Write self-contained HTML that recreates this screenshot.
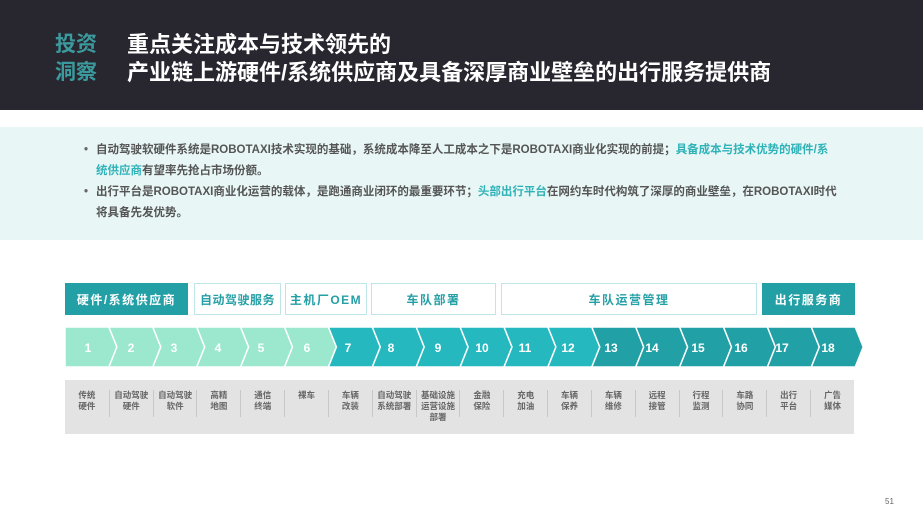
<!DOCTYPE html>
<html><head><meta charset="utf-8"><style>
*{margin:0;padding:0;box-sizing:border-box}
body{width:923px;height:511px;background:#fff;position:relative;overflow:hidden;font-family:"Liberation Sans","Noto Sans CJK SC",sans-serif}
.hdr{position:absolute;left:0;top:0;width:923px;height:110px;background:#28262f}
.tag{position:absolute;left:55px;top:31px;color:#3b9a9d;font-size:21px;font-weight:bold;line-height:28px}
.ttl{position:absolute;left:127px;top:31px;color:#fff;font-size:22px;font-weight:bold;line-height:28px;white-space:nowrap}
.info{position:absolute;left:0;top:127px;width:923px;height:113px;background:#e8f6f6}
.info p{position:absolute;left:96px;white-space:nowrap;font-size:11.5px;line-height:21px;color:#555;font-weight:bold}
.info p:before{content:"•";position:absolute;left:-12px;color:#666}
.hl{color:#2fb3b8}
.box{position:absolute;top:283px;height:32px;border:1.5px solid #bfe5e6;color:#25a0a6;font-size:12px;font-weight:bold;display:flex;align-items:center;justify-content:center;letter-spacing:1.5px}
.box.f{background:#22a0a6;color:#fff;border-color:#22a0a6}
.grey{position:absolute;left:65px;top:380px;width:789px;height:54px;background:#e3e3e3;display:flex;padding-top:10px}
.grey div{width:43.83px;text-align:center;font-size:8.5px;line-height:11px;color:#666;font-weight:bold;border-left:1px solid #c8c8c8;height:27px;white-space:nowrap}
.grey div:first-child{border-left:none}
.pn{position:absolute;left:885px;top:497px;font-size:8px;color:#666}
</style></head><body>
<div class="hdr"></div>
<div class="tag">投资<br>洞察</div>
<div class="ttl">重点关注成本与技术领先的<br>产业链上游硬件/系统供应商及具备深厚商业壁垒的出行服务提供商</div>
<div class="info">
<p style="top:13px">自动驾驶软硬件系统是ROBOTAXI技术实现的基础，系统成本降至人工成本之下是ROBOTAXI商业化实现的前提；<span class="hl">具备成本与技术优势的硬件/系<br>统供应商</span>有望率先抢占市场份额。</p>
<p style="top:55px">出行平台是ROBOTAXI商业化运营的载体，是跑通商业闭环的最重要环节；<span class="hl">头部出行平台</span>在网约车时代构筑了深厚的商业壁垒，在ROBOTAXI时代<br>将具备先发优势。</p>
</div>
<div class="box f" style="left:65px;width:123px">硬件/系统供应商</div>
<div class="box" style="left:194px;width:87px;letter-spacing:0.5px">自动驾驶服务</div>
<div class="box" style="left:285px;width:82px">主机厂OEM</div>
<div class="box" style="left:371px;width:125px">车队部署</div>
<div class="box" style="left:501px;width:256px">车队运营管理</div>
<div class="box f" style="left:762px;width:93px">出行服务商</div>
<svg style="position:absolute;left:0;top:0" width="923" height="511">
<g stroke="#fff" stroke-width="1.5">
<polygon fill="#9be8cf" points="65,327 108.9,327 116.9,347 108.9,367 65,367"/>
<polygon fill="#9be8cf" points="108.9,327 152.8,327 160.8,347 152.8,367 108.9,367 116.9,347"/>
<polygon fill="#9be8cf" points="152.8,327 196.7,327 204.7,347 196.7,367 152.8,367 160.8,347"/>
<polygon fill="#9be8cf" points="196.7,327 240.6,327 248.6,347 240.6,367 196.7,367 204.7,347"/>
<polygon fill="#9be8cf" points="240.6,327 284.5,327 292.5,347 284.5,367 240.6,367 248.6,347"/>
<polygon fill="#9be8cf" points="284.5,327 328.4,327 336.4,347 328.4,367 284.5,367 292.5,347"/>
<polygon fill="#26b8bf" points="328.4,327 372.3,327 380.3,347 372.3,367 328.4,367 336.4,347"/>
<polygon fill="#26b8bf" points="372.3,327 416.2,327 424.2,347 416.2,367 372.3,367 380.3,347"/>
<polygon fill="#26b8bf" points="416.2,327 460.1,327 468.1,347 460.1,367 416.2,367 424.2,347"/>
<polygon fill="#26b8bf" points="460.1,327 504,327 512,347 504,367 460.1,367 468.1,347"/>
<polygon fill="#26b8bf" points="504,327 547.9,327 555.9,347 547.9,367 504,367 512,347"/>
<polygon fill="#26b8bf" points="547.9,327 591.8,327 599.8,347 591.8,367 547.9,367 555.9,347"/>
<polygon fill="#21a0a6" points="591.8,327 635.7,327 643.7,347 635.7,367 591.8,367 599.8,347"/>
<polygon fill="#21a0a6" points="635.7,327 679.6,327 687.6,347 679.6,367 635.7,367 643.7,347"/>
<polygon fill="#21a0a6" points="679.6,327 723.5,327 731.5,347 723.5,367 679.6,367 687.6,347"/>
<polygon fill="#21a0a6" points="723.5,327 767.4,327 775.4,347 767.4,367 723.5,367 731.5,347"/>
<polygon fill="#21a0a6" points="767.4,327 811.3,327 819.3,347 811.3,367 767.4,367 775.4,347"/>
<polygon fill="#21a0a6" points="811.3,327 855.2,327 863.2,347 855.2,367 811.3,367 819.3,347"/>
</g>
<g fill="#fff" font-family="Liberation Sans" font-size="12" font-weight="bold" text-anchor="middle">
<text x="88" y="352">1</text><text x="131" y="352">2</text><text x="174" y="352">3</text><text x="218" y="352">4</text><text x="261" y="352">5</text><text x="307" y="352">6</text><text x="348" y="352">7</text><text x="391" y="352">8</text><text x="438" y="352">9</text><text x="482" y="352">10</text><text x="525" y="352">11</text><text x="568" y="352">12</text><text x="611" y="352">13</text><text x="652" y="352">14</text><text x="698" y="352">15</text><text x="741" y="352">16</text><text x="782" y="352">17</text><text x="828" y="352">18</text>
</g></svg>
<div class="grey">
<div>传统<br>硬件</div><div>自动驾驶<br>硬件</div><div>自动驾驶<br>软件</div><div>高精<br>地图</div><div>通信<br>终端</div><div>裸车</div><div>车辆<br>改装</div><div>自动驾驶<br>系统部署</div><div>基础设施<br>运营设施<br>部署</div><div>金融<br>保险</div><div>充电<br>加油</div><div>车辆<br>保养</div><div>车辆<br>维修</div><div>远程<br>接管</div><div>行程<br>监测</div><div>车路<br>协同</div><div>出行<br>平台</div><div>广告<br>媒体</div>
</div>
<div class="pn">51</div>
</body></html>
